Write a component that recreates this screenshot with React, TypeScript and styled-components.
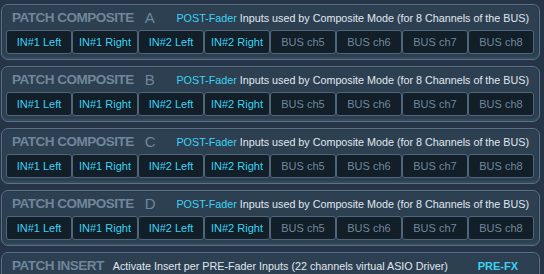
import React from 'react';
import styled, { createGlobalStyle } from 'styled-components';

const GlobalStyle = createGlobalStyle`
  html, body {
    margin: 0;
    padding: 0;
    background: #253446;
    overflow: hidden;
  }
  body {
    font-family: "Liberation Sans", Arial, sans-serif;
  }
`;

const Page = styled.div`
  width: 544px;
  height: 274px;
  padding: 4px 4px 0 1px;
  box-sizing: border-box;
  display: flex;
  flex-direction: column;
  gap: 6px;
  overflow: hidden;
`;

const Panel = styled.section`
  flex: none;
  box-sizing: border-box;
  height: 56px;
  padding: 2px 4px 5px 4px;
  border: 1px solid #5a7287;
  border-radius: 7px;
  background: #2d4052;
  box-shadow: inset 0 -2px 0 #35495d, inset 0 0 0 1px #29394a;
  display: flex;
  flex-direction: column;
`;

const Header = styled.div`
  height: 21px;
  margin-bottom: 2px;
  padding: 0 6px 0 6px;
  display: flex;
  align-items: center;
  white-space: nowrap;
`;

const Title = styled.span`
  font-size: 13.5px;
  font-weight: bold;
  letter-spacing: -0.5px;
  color: #70869a;
`;

const Letter = styled.span`
  margin-left: 11px;
  font-size: 15px;
  color: #70869a;
`;

const Desc = styled.span<{ $left?: boolean }>`
  margin-left: ${(p) => (p.$left ? '9px' : 'auto')};
  font-size: 10.75px;
  color: #e0e7ee;
`;

const Cyan = styled.span<{ $bold?: boolean }>`
  color: #3cd3f3;
  font-weight: ${(p) => (p.$bold ? 'bold' : 'normal')};
`;

const Tag = styled(Cyan)`
  margin-left: auto;
  margin-right: 11px;
  font-size: 11px;
`;

const Row = styled.div`
  display: flex;
  height: 24px;
`;

const Slot = styled.div<{ $active: boolean }>`
  width: 66px;
  box-sizing: border-box;
  border: 1px solid #50667a;
  border-radius: 3px;
  background: #121e28;
  display: flex;
  align-items: center;
  justify-content: center;
  font-size: 11px;
  color: ${(p) => (p.$active ? '#3cd3f3' : '#71889b')};
`;

const slots = [
  'IN#1 Left',
  'IN#1 Right',
  'IN#2 Left',
  'IN#2 Right',
  'BUS ch5',
  'BUS ch6',
  'BUS ch7',
  'BUS ch8',
];

const Composite: React.FC<{ letter: string }> = ({ letter }) => (
  <Panel>
    <Header>
      <Title>PATCH COMPOSITE</Title>
      <Letter>{letter}</Letter>
      <Desc>
        <Cyan>POST-Fader</Cyan>
        {' '}
        Inputs used by Composite Mode (for 8 Channels of the BUS)
      </Desc>
    </Header>
    <Row>
      {slots.map((s, i) => (
        <Slot key={s} $active={i < 4}>{s}</Slot>
      ))}
    </Row>
  </Panel>
);

const App: React.FC = () => (
  <>
    <GlobalStyle />
    <Page>
      {['A', 'B', 'C', 'D'].map((l) => (
        <Composite key={l} letter={l} />
      ))}
      <Panel>
        <Header>
          <Title>PATCH INSERT</Title>
          <Desc $left>
            Activate Insert per PRE-Fader Inputs (22 channels virtual ASIO Driver)
          </Desc>
          <Tag $bold>PRE-FX</Tag>
        </Header>
      </Panel>
    </Page>
  </>
);

export default App;
